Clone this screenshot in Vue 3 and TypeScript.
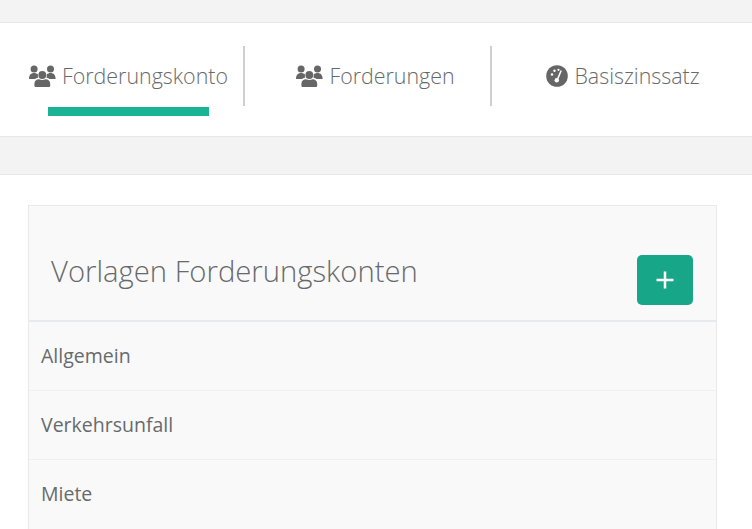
<template>
  <div class="seite">
    <div class="streifen-oben"></div>

    <nav class="reiter">
      <div v-for="(tab, i) in tabs" :key="tab.label" class="reiter-spalte">
        <div class="reiter-label" :class="'reiter-' + i">
          <svg v-if="tab.icon === 'users'" class="icon-users" viewBox="0 0 27 22" aria-hidden="true">
            <g fill="#666666">
              <circle cx="5.100" cy="4" r="3.500" />
              <circle cx="21.500" cy="4" r="3.500" />
              <circle cx="13.300" cy="10" r="3.900" />
              <path d="M0 14 C0 10 2 8 5 8 C6.500 8 8 8.500 9 9.500 C8.700 10.700 8.800 11.700 9.300 12.600 C7.800 13 6.700 13.400 5.900 14 Z" />
              <path d="M26.600 14 C26.600 10 24.600 8 21.600 8 C20.100 8 18.600 8.500 17.600 9.500 C17.900 10.700 17.800 11.700 17.300 12.600 C18.800 13 19.900 13.400 20.700 14 Z" />
              <path d="M5.400 20.800 V18.800 C5.400 16 7.500 14.300 10 14.300 C11 14.800 12.200 15 13.300 15 C14.400 15 15.600 14.800 16.600 14.300 C19.100 14.300 21.200 16 21.200 18.800 V20.800 Q21.200 22 20 22 H6.600 Q5.400 22 5.400 20.800 Z" />
            </g>
          </svg>
          <svg v-else class="icon-tacho" viewBox="0 0 22 22" aria-hidden="true">
            <circle cx="11" cy="11" r="10.800" fill="#666666" />
            <circle cx="6" cy="9.500" r="1.200" fill="#fff" />
            <circle cx="8.500" cy="5.800" r="1.200" fill="#fff" />
            <circle cx="12.500" cy="4.800" r="1.100" fill="#fff" />
            <path d="M15.200 5.500 L11.800 13.600" stroke="#fff" stroke-width="1.500" fill="none" />
            <circle cx="10.800" cy="15.200" r="2.200" fill="#fff" />
          </svg>
          <span>{{ tab.label }}</span>
        </div>
        <div v-if="tab.aktiv" class="reiter-balken"></div>
      </div>
    </nav>

    <div class="streifen-mitte"></div>

    <section class="karte">
      <header class="karte-kopf">
        <h2>Vorlagen Forderungskonten</h2>
        <button class="btn-neu" type="button" aria-label="Neu">
          <svg viewBox="0 0 18 18" aria-hidden="true">
            <path d="M9 0.500 V17.500 M0.500 9 H17.500" stroke="#fff" stroke-width="2.500" fill="none" />
          </svg>
        </button>
      </header>
      <div v-for="zeile in vorlagen" :key="zeile" class="zeile">{{ zeile }}</div>
    </section>
  </div>
</template>

<script setup lang="ts">
interface Tab {
  label: string
  icon: 'users' | 'tacho'
  aktiv: boolean
}

const tabs: Tab[] = [
  { label: 'Forderungskonto', icon: 'users', aktiv: true },
  { label: 'Forderungen', icon: 'users', aktiv: false },
  { label: 'Basiszinssatz', icon: 'tacho', aktiv: false },
]

const vorlagen: string[] = ['Allgemein', 'Verkehrsunfall', 'Miete']
</script>

<style scoped>
.seite {
  height: 529px;
  overflow: hidden;
  background: #fff;
  color: #676a6c;
  font-family: "Open Sans", "Liberation Sans", sans-serif;
}

.streifen-oben {
  height: 22px;
  background: #f3f3f3;
  border-bottom: 1px solid #e7e7e7;
}

.reiter {
  display: grid;
  grid-template-columns: 245px 247px 1fr;
  height: 114px;
  padding-top: 23px;
  box-sizing: border-box;
  border-bottom: 1px solid #e7e7e7;
}

.reiter-label {
  display: flex;
  align-items: center;
  justify-content: center;
  gap: 6px;
  height: 60px;
  box-sizing: border-box;
  font-size: 21.4px;
  font-weight: 300;
}

.reiter-label span {
  position: relative;
  top: -1px;
}

.reiter-0 {
  padding-left: 14px;
  border-right: 2px solid #cfcfcf;
}

.reiter-1 {
  padding-left: 16px;
  border-right: 2px solid #cfcfcf;
}

.reiter-2 {
  padding-left: 2px;
}

.icon-users {
  width: 27px;
  height: 22px;
  flex: none;
}

.icon-tacho {
  width: 22px;
  height: 22px;
  flex: none;
}

.reiter-balken {
  width: 161px;
  height: 9px;
  margin: 1px 0 0 48px;
  background: #1ab394;
}

.streifen-mitte {
  height: 37px;
  background: #f3f3f3;
  border-bottom: 1px solid #e7e7e7;
}

.karte {
  margin: 30px 35px 0 28px;
  background: #f9f9f9;
  border: 1px solid #e7eaec;
}

.karte-kopf {
  display: flex;
  align-items: flex-start;
  justify-content: space-between;
  height: 116px;
  box-sizing: border-box;
  padding: 49px 23px 0 22px;
  border-bottom: 2px solid #e7eaec;
}

.karte-kopf h2 {
  margin: -2px 0 0;
  font-size: 29.25px;
  font-weight: 300;
  line-height: 36px;
}

.btn-neu {
  display: flex;
  align-items: center;
  justify-content: center;
  width: 56px;
  height: 50px;
  padding: 0;
  border: none;
  border-radius: 5px;
  background: #18a689;
}

.btn-neu svg {
  width: 18px;
  height: 18px;
}

.zeile {
  height: 69px;
  box-sizing: border-box;
  padding: 0 12px 2px;
  display: flex;
  align-items: center;
  font-size: 19.5px;
  border-bottom: 1px solid #f0f0f0;
}

.zeile:last-child {
  height: 90px;
  padding-bottom: 23px;
}
</style>

<style>
html,
body {
  margin: 0;
  overflow: hidden;
}
</style>
